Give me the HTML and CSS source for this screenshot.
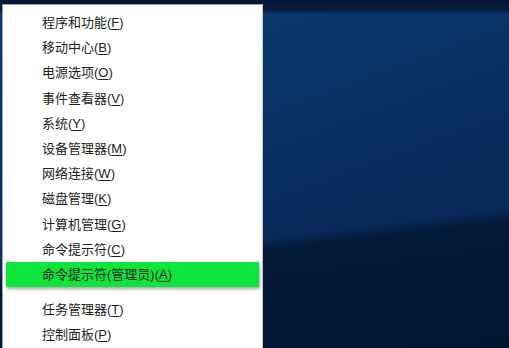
FILE: index.html
```html
<!DOCTYPE html>
<html lang="zh-CN">
<head>
    <meta charset="UTF-8">
    <title>快速链接菜单</title>
    <link rel="stylesheet" href="styles.css">
</head>
<body>
    <div class="desktop">
        <div class="menu">
            <div class="item">程序和功能(<u>F</u>)</div>
            <div class="item">移动中心(<u>B</u>)</div>
            <div class="item">电源选项(<u>O</u>)</div>
            <div class="item">事件查看器(<u>V</u>)</div>
            <div class="item">系统(<u>Y</u>)</div>
            <div class="item">设备管理器(<u>M</u>)</div>
            <div class="item">网络连接(<u>W</u>)</div>
            <div class="item">磁盘管理(<u>K</u>)</div>
            <div class="item">计算机管理(<u>G</u>)</div>
            <div class="item">命令提示符(<u>C</u>)</div>
            <div class="item active">命令提示符(管理员)(<u>A</u>)</div>
            <div class="separator"></div>
            <div class="item">任务管理器(<u>T</u>)</div>
            <div class="item">控制面板(<u>P</u>)</div>
        </div>
    </div>
</body>
</html>
```

FILE: styles.css
```css
html, body {
    margin: 0;
    height: 100%;
}
body {
    font-family: "Liberation Sans", "Noto Sans CJK SC", sans-serif;
    overflow: hidden;
}
.desktop {
    height: 100%;
    background:
        linear-gradient(180deg, #051633 0px, #071d40 10px, rgba(0,0,0,0) 14px),
        linear-gradient(173deg, rgba(0,0,0,0) 66%, #031a38 69%, #021632 100%),
        linear-gradient(160deg, #0c3a72 0%, #0a3468 35%, #08295a 65%);
    padding: 4px 0 0 2px;
    box-sizing: border-box;
}
.menu {
    width: 261px;
    height: 360px;
    background: #fff;
    border: 1px solid #a0a0a0;
    border-right-color: #c8c8c8;
    padding: 5px 3px 0 3px;
    box-sizing: border-box;
}
.item {
    height: 25.2px;
    line-height: 25px;
    padding-left: 36px;
    font-size: 13px;
    color: #1e1e1e;
    white-space: nowrap;
}
.item u {
    text-underline-offset: 2px;
}
.item.active {
    background: #0ee53c;
    box-shadow: 1px 2px 3px rgba(0, 0, 0, 0.35);
}
.separator {
    height: 10px;
}
```
